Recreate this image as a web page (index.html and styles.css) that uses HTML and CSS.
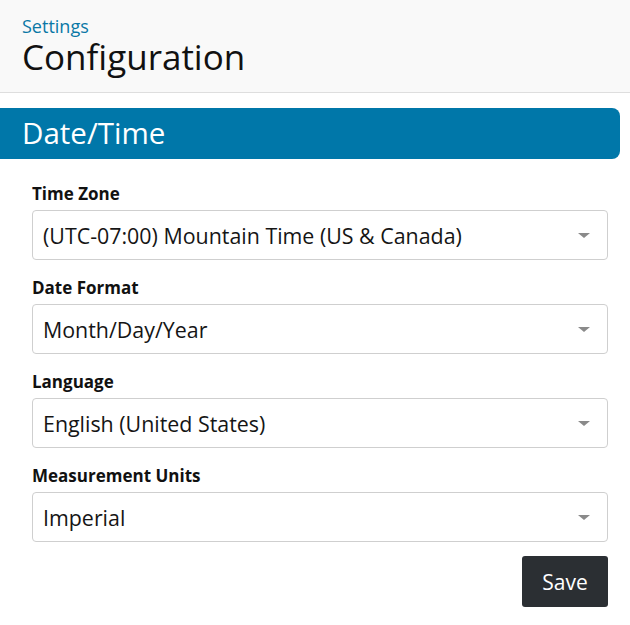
FILE: index.html
```html
<!DOCTYPE html>
<html lang="en">
<head>
<meta charset="utf-8">
<title>Configuration</title>
<link rel="stylesheet" href="styles.css">
</head>
<body>
<header class="page-header">
  <div class="crumb">Settings</div>
  <h1 class="title">Configuration</h1>
</header>
<section class="panel">
  <h2 class="panel-title">Date/Time</h2>
  <form class="form">
    <div class="field">
      <label class="label">Time Zone</label>
      <div class="select"><span class="value">(UTC-07:00) Mountain Time (US &amp; Canada)</span><span class="caret"></span></div>
    </div>
    <div class="field">
      <label class="label">Date Format</label>
      <div class="select"><span class="value">Month/Day/Year</span><span class="caret"></span></div>
    </div>
    <div class="field">
      <label class="label">Language</label>
      <div class="select"><span class="value">English (United States)</span><span class="caret"></span></div>
    </div>
    <div class="field">
      <label class="label">Measurement Units</label>
      <div class="select"><span class="value">Imperial</span><span class="caret"></span></div>
    </div>
    <div class="actions">
      <button type="button" class="btn">Save</button>
    </div>
  </form>
</section>
</body>
</html>
```
FILE: styles.css
```css
* { box-sizing: border-box; }
html, body { margin: 0; padding: 0; background: #fff; }
body { font-family: "Open Sans", "Noto Sans", sans-serif; color: #111; }

.page-header {
  height: 93px;
  background: #f9f9f9;
  border-bottom: 1px solid #dedede;
  padding: 15px 22px 0;
}
.crumb { font-size: 18px; line-height: 22px; color: #0a78a6; }
.title { margin: 0; font-size: 35px; font-weight: 400; line-height: 40px; color: #111; }

.panel { padding-top: 15px; }
.panel-title {
  margin: 0 10px 0 0;
  height: 51px;
  background: #0077a9;
  color: #fff;
  border-radius: 0 8px 8px 0;
  font-size: 29.5px;
  font-weight: 400;
  line-height: 50px;
  padding-left: 22px;
}

.form { padding: 24px 22px 0 32px; display: flex; flex-direction: column; }
.field { display: flex; flex-direction: column; margin-bottom: 17px; }
.label { font-size: 17px; font-weight: 700; line-height: 22px; margin-bottom: 5px; }
.select {
  height: 50px;
  border: 1px solid #cfcfcf;
  border-radius: 4px;
  display: flex;
  align-items: center;
  justify-content: space-between;
  padding: 0 17px 0 10px;
  font-size: 21.4px;
  color: #151515;
}
.caret {
  width: 0; height: 0;
  border-left: 6px solid transparent;
  border-right: 6px solid transparent;
  border-top: 5px solid #8a8a8a;
}
.actions { display: flex; justify-content: flex-end; margin-top: -3px; }
.btn {
  width: 86px; height: 51px;
  background: #2b2f33;
  color: #fff;
  border: none;
  border-radius: 3px;
  font-family: inherit;
  font-size: 21px;
}
```
